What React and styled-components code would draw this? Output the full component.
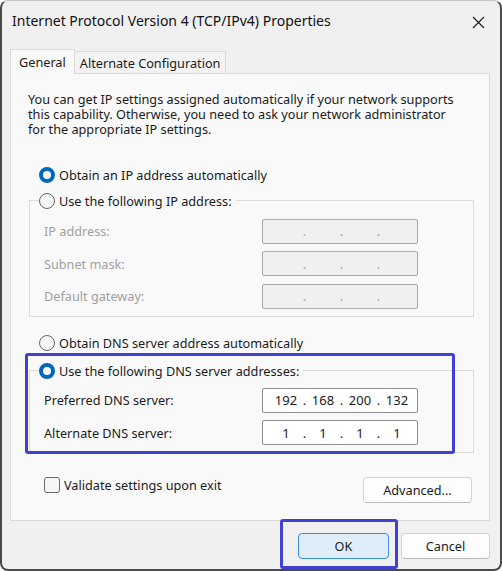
import React from 'react';
import styled, { createGlobalStyle } from 'styled-components';

const GlobalStyle = createGlobalStyle`
  html, body {
    margin: 0;
    padding: 0;
    background: #ffffff;
  }
  body {
    font-family: "Noto Sans", "Open Sans", sans-serif;
    font-size: 12.7px;
    color: #1b1b1b;
  }
`;

const Window = styled.div`
  box-sizing: border-box;
  width: 502px;
  height: 571px;
  background: #f0f0f0;
  border: 2px solid #4a4a4a;
  border-top: 1px solid #c4c4c4;
  border-radius: 8px;
  display: flex;
  flex-direction: column;
  overflow: hidden;
`;

const TitleBar = styled.div`
  height: 39px;
  padding: 0 15px 0 10px;
  display: flex;
  align-items: center;
  justify-content: space-between;
`;

const Title = styled.div`
  font-size: 14px;
  color: #111;
`;

const CloseIcon = styled.svg`
  margin-top: 3px;
  display: block;
`;

const Body = styled.div`
  padding: 9px 10px 10px 8px;
  display: flex;
  flex-direction: column;
`;

const Tabs = styled.div`
  display: flex;
  align-items: flex-end;
  height: 25px;
  margin-bottom: -1px;
  position: relative;
  z-index: 1;
`;

const Tab = styled.div`
  box-sizing: border-box;
  display: flex;
  align-items: center;
  border: 1px solid #d9d9d9;
  border-bottom: none;
  height: ${(p) => (p.$active ? '25px' : '22px')};
  margin-bottom: ${(p) => (p.$active ? '0' : '1px')};
  padding: ${(p) => (p.$active ? '0 8px' : '0 5px')};
  background: ${(p) => (p.$active ? '#f9f9f9' : '#f3f3f3')};
  border-left: ${(p) => (p.$active ? '1px solid #d9d9d9' : 'none')};
`;

const Panel = styled.div`
  box-sizing: border-box;
  height: 448px;
  background: #f9f9f9;
  border: 1px solid #dadada;
  padding: 18px 17px 17px 17px;
  display: flex;
  flex-direction: column;
`;

const Description = styled.p`
  margin: 0;
  line-height: 15px;
`;

const Option = styled.div`
  display: flex;
  align-items: center;
  gap: 4px;
  height: 20px;
  margin: ${(p) => p.$margin || '0'};
  padding-left: ${(p) => (p.$inLegend ? '0' : '11px')};
`;

const Radio = styled.span`
  box-sizing: border-box;
  width: 16px;
  height: 16px;
  border-radius: 50%;
  flex: none;
  border: ${(p) => (p.$checked ? '4.5px solid #0067c0' : '1px solid #686868')};
  background: ${(p) => (p.$checked ? '#ffffff' : '#f6f6f6')};
`;

const Checkbox = styled.span`
  box-sizing: border-box;
  width: 16px;
  height: 16px;
  border-radius: 3px;
  flex: none;
  border: 1px solid #6a6a6a;
  background: #f6f6f6;
`;

const Block = styled.div`
  position: relative;
  margin: ${(p) => p.$margin || '0'};
`;

const Group = styled.fieldset`
  margin: 0;
  min-width: 0;
  border: 1px solid #dcdcdc;
  padding: ${(p) => p.$padTop}px 0 7px 9px;
`;

const Legend = styled.legend`
  padding: 0 4px 0 0;
`;

const Fields = styled.div`
  display: flex;
  flex-direction: column;
  gap: 7.5px;
  padding-left: 5px;
`;

const Field = styled.div`
  display: flex;
  align-items: center;
  height: 25px;
`;

const FieldLabel = styled.span`
  width: 218px;
  color: ${(p) => (p.$disabled ? '#a0a0a0' : '#1b1b1b')};
`;

const IpBox = styled.div`
  box-sizing: border-box;
  width: 156px;
  height: 25px;
  display: flex;
  align-items: center;
  padding: 0 5px 0 8px;
  border: 1px solid ${(p) => (p.$disabled ? '#a9a9a9' : '#8e8e8e')};
  border-radius: 2px;
  background: ${(p) => (p.$disabled ? '#f0f0f0' : '#ffffff')};
  color: ${(p) => (p.$disabled ? '#a0a0a0' : '#1b1b1b')};
  font-size: 13px;
`;

const Octet = styled.span`
  width: 30px;
  text-align: center;
`;

const Dot = styled.span`
  width: 7px;
  text-align: center;
`;

const Footer = styled.div`
  display: flex;
  justify-content: space-between;
  align-items: flex-start;
  margin-top: 24px;
`;

const CheckRow = styled.label`
  display: flex;
  align-items: center;
  gap: 4px;
  margin-top: -1px;
  padding-left: 16px;
`;

const Button = styled.button`
  box-sizing: border-box;
  width: ${(p) => p.$width}px;
  height: 26px;
  font: inherit;
  color: #1b1b1b;
  border-radius: 4px;
  border: 1px solid ${(p) => (p.$primary ? '#3a8fe0' : '#d3d3d3')};
  border-bottom-color: ${(p) => (p.$primary ? '#3a8fe0' : '#bcbcbc')};
  background: ${(p) => (p.$primary ? '#dfedf9' : '#fdfdfd')};
  padding: 0;
`;

const Actions = styled.div`
  display: flex;
  justify-content: flex-end;
  gap: 12px;
  margin-top: 12px;
`;

const Anchor = styled.div`
  position: relative;
`;

const Highlight = styled.div`
  position: absolute;
  top: ${(p) => p.$t}px;
  left: ${(p) => p.$l}px;
  right: ${(p) => p.$r}px;
  bottom: ${(p) => p.$b}px;
  border: 3px solid #4141cf;
  border-radius: 3px;
  pointer-events: none;
`;

const IpInput = ({ value, disabled }) => {
  const parts = value ? value.split('.') : ['', '', '', ''];
  return (
    <IpBox $disabled={disabled}>
      {parts.map((part, i) => (
        <React.Fragment key={i}>
          {i > 0 && <Dot>.</Dot>}
          <Octet>{part}</Octet>
        </React.Fragment>
      ))}
    </IpBox>
  );
};

export default function App() {
  return (
    <>
      <GlobalStyle />
      <Window>
        <TitleBar>
          <Title>Internet Protocol Version 4 (TCP/IPv4) Properties</Title>
          <CloseIcon width="13" height="13" viewBox="0 0 13 13">
            <path d="M1 1 L12 12 M12 1 L1 12" stroke="#1a1a1a" strokeWidth="1.1" fill="none" />
          </CloseIcon>
        </TitleBar>
        <Body>
          <Tabs>
            <Tab $active>General</Tab>
            <Tab>Alternate Configuration</Tab>
          </Tabs>
          <Panel>
            <Description>
              You can get IP settings assigned automatically if your network supports
              <br />
              this capability. Otherwise, you need to ask your network administrator
              <br />
              for the appropriate IP settings.
            </Description>

            <Option $margin="28px 0 0 0">
              <Radio $checked />
              Obtain an IP address automatically
            </Option>

            <Block $margin="6px -2px 0 1px">
              <Group $padTop={8}>
                <Legend>
                  <Option $inLegend>
                    <Radio />
                    Use the following IP address:
                  </Option>
                </Legend>
                <Fields>
                  <Field>
                    <FieldLabel $disabled>IP address:</FieldLabel>
                    <IpInput disabled />
                  </Field>
                  <Field>
                    <FieldLabel $disabled>Subnet mask:</FieldLabel>
                    <IpInput disabled />
                  </Field>
                  <Field>
                    <FieldLabel $disabled>Default gateway:</FieldLabel>
                    <IpInput disabled />
                  </Field>
                </Fields>
              </Group>
            </Block>

            <Option $margin="16px 0 0 0">
              <Radio />
              Obtain DNS server address automatically
            </Option>

            <Block $margin="8px -2px 0 1px">
              <Group $padTop={7}>
                <Legend>
                  <Option $inLegend>
                    <Radio $checked />
                    Use the following DNS server addresses:
                  </Option>
                </Legend>
                <Fields>
                  <Field>
                    <FieldLabel>Preferred DNS server:</FieldLabel>
                    <IpInput value="192.168.200.132" />
                  </Field>
                  <Field>
                    <FieldLabel>Alternate DNS server:</FieldLabel>
                    <IpInput value="1.1.1.1" />
                  </Field>
                </Fields>
              </Group>
              <Highlight $t={-8} $l={-4} $r={19} $b={-1} />
            </Block>

            <Footer>
              <CheckRow>
                <Checkbox />
                Validate settings upon exit
              </CheckRow>
              <Button $width={109}>Advanced...</Button>
            </Footer>
          </Panel>
          <Actions>
            <Anchor>
              <Button $width={91} $primary>OK</Button>
              <Highlight $t={-14} $l={-18} $r={-9} $b={-10} />
            </Anchor>
            <Button $width={89}>Cancel</Button>
          </Actions>
        </Body>
      </Window>
    </>
  );
}
